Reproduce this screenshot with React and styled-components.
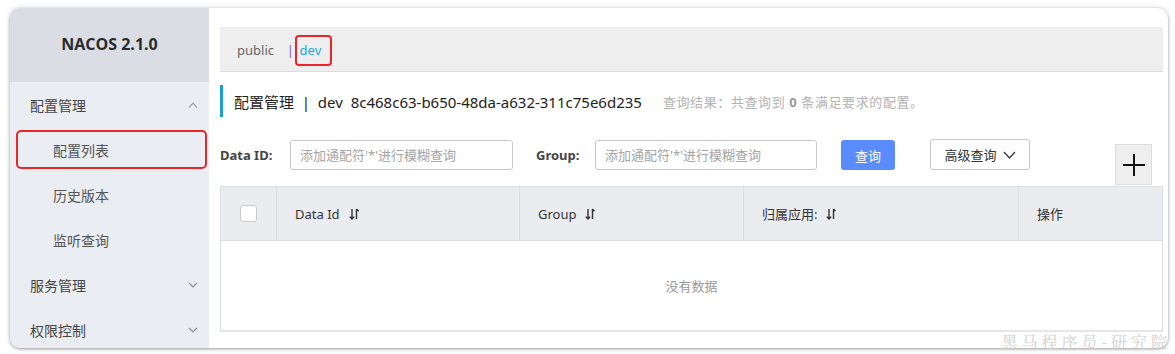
import React from 'react'
import styled, { createGlobalStyle } from 'styled-components'

const Global = createGlobalStyle`
  html, body { margin: 0; padding: 0; background: #fff; }
  body { font-family: "Noto Sans", "Noto Sans CJK SC", sans-serif; }
`

const SortIcon = () => (
  <svg width="10" height="12" viewBox="0 0 10 12" fill="none" stroke="#333" strokeWidth="1.4">
    <path d="M3 1v10M0.8 8.6L3 11l2.2-2.4" />
    <path d="M7.5 11V1M7.5 1l2 2.2" />
  </svg>
)

const Chevron = ({ up }) => (
  <svg width="10" height="6" viewBox="0 0 10 6" fill="none" stroke="#888" strokeWidth="1.1">
    {up ? <path d="M1 5.5L5 1.2l4 4.3" /> : <path d="M1 0.8L5 5l4-4.2" />}
  </svg>
)

const menu = [
  { label: '配置管理', top: true, chevron: 'up' },
  { label: '配置列表', active: true },
  { label: '历史版本' },
  { label: '监听查询' },
  { label: '服务管理', top: true, chevron: 'down' },
  { label: '权限控制', top: true, chevron: 'down' },
]

const columns = [
  { label: 'Data Id', width: 243, sort: true },
  { label: 'Group', width: 224, sort: true },
  { label: '归属应用:', width: 275, sort: true },
  { label: '操作', flex: true },
]

export default function App() {
  return (
    <Page>
      <Global />
      <Frame>
        <Sidebar>
          <Brand>NACOS 2.1.0</Brand>
          <Menu>
            {menu.map((m) => (
              <MenuItem key={m.label} $top={m.top}>
                {m.active ? <Highlight>{m.label}</Highlight> : <span>{m.label}</span>}
                {m.chevron && <Chevron up={m.chevron === 'up'} />}
              </MenuItem>
            ))}
          </Menu>
        </Sidebar>
        <Main>
          <NamespaceBar>
            <NsLink>public</NsLink>
            <NsSep>|</NsSep>
            <NsActive>dev</NsActive>
          </NamespaceBar>
          <TitleRow>
            <Title>配置管理&nbsp;&nbsp;|&nbsp;&nbsp;dev&nbsp;&nbsp;8c468c63-b650-48da-a632-311c75e6d235</Title>
            <Summary>查询结果：共查询到 <b>0</b> 条满足要求的配置。</Summary>
          </TitleRow>
          <SearchRow>
            <Label>Data ID:</Label>
            <Input $w={223} placeholder="添加通配符'*'进行模糊查询" />
            <Label $ml={23}>Group:</Label>
            <Input $w={222} placeholder="添加通配符'*'进行模糊查询" />
            <PrimaryButton>查询</PrimaryButton>
            <GhostButton>
              高级查询
              <svg width="13" height="8" viewBox="0 0 13 8" fill="none" stroke="#333" strokeWidth="1.2">
                <path d="M1 1l5.5 6L12 1" />
              </svg>
            </GhostButton>
            <AddButton>
              <svg width="22" height="22" viewBox="0 0 22 22" stroke="#111" strokeWidth="2">
                <path d="M11 0v22M0 11h22" />
              </svg>
            </AddButton>
          </SearchRow>
          <Table>
            <HeadRow>
              <CheckCell>
                <Checkbox />
              </CheckCell>
              {columns.map((c) => (
                <HeadCell key={c.label} $w={c.width} $flex={c.flex}>
                  {c.label}
                  {c.sort && <SortIcon />}
                </HeadCell>
              ))}
            </HeadRow>
            <Empty>没有数据</Empty>
          </Table>
        </Main>
      </Frame>
      <Watermark>黑马程序员-研究院</Watermark>
    </Page>
  )
}

const Page = styled.div`
  position: relative;
  width: 1175px;
  height: 354px;
  overflow: hidden;
  padding-top: 8px;
  box-sizing: border-box;
`

const Frame = styled.div`
  margin-left: 10px;
  width: 1158px;
  height: 340px;
  border-radius: 10px;
  overflow: hidden;
  display: flex;
  background: #fff;
  box-shadow: 0 1px 3px rgba(0, 0, 0, 0.35), 0 0 6px rgba(0, 0, 0, 0.12);
`

const Sidebar = styled.div`
  width: 199px;
  flex-shrink: 0;
  background: #eaedf1;
  display: flex;
  flex-direction: column;
`

const Brand = styled.div`
  height: 74px;
  flex-shrink: 0;
  background: #dadee4;
  display: flex;
  align-items: center;
  justify-content: center;
  font-family: "Open Sans", "Noto Sans", sans-serif;
  font-weight: 700;
  font-size: 16px;
  color: #2b2b2b;
  padding-bottom: 2px;
  box-sizing: border-box;
`

const Menu = styled.div`
  display: flex;
  flex-direction: column;
`

const MenuItem = styled.div`
  height: 45px;
  flex-shrink: 0;
  display: flex;
  align-items: center;
  justify-content: space-between;
  padding: ${(p) => (p.$top ? '0 11px 0 20px' : '0 2px 0 43px')};
  font-size: 14px;
  color: ${(p) => (p.$top ? '#444' : '#555')};
`

const Highlight = styled.span`
  flex: 1;
  margin-left: -37px;
  height: 39px;
  box-sizing: border-box;
  border: 2px solid #e8262a;
  border-radius: 5px;
  display: flex;
  align-items: center;
  padding-left: 35px;
`

const Main = styled.div`
  flex: 1;
  padding: 19px 5px 0 11px;
  display: flex;
  flex-direction: column;
  min-width: 0;
`

const NamespaceBar = styled.div`
  height: 45px;
  background: #eeeeee;
  border-bottom: 1px solid #dcdcdc;
  box-sizing: border-box;
  display: flex;
  align-items: center;
  padding: 2px 0 0 17px;
  font-size: 13px;
`

const NsLink = styled.span`
  color: #666;
`

const NsSep = styled.span`
  color: #7a5f99;
  margin-left: 13px;
  font-size: 12px;
`

const NsActive = styled.span`
  color: #22a6e6;
  margin-left: 1px;
  border: 2px solid #e8262a;
  border-radius: 4px;
  height: 31px;
  width: 37px;
  box-sizing: border-box;
  display: flex;
  align-items: center;
  padding-left: 3px;
`

const TitleRow = styled.div`
  margin-top: 13px;
  height: 32px;
  border-left: 3px solid #1c9bd6;
  display: flex;
  align-items: center;
  padding-left: 11px;
  white-space: nowrap;
`

const Title = styled.span`
  font-size: 15px;
  color: #222;
`

const Summary = styled.span`
  margin-left: 21px;
  font-size: 13px;
  letter-spacing: 0.6px;
  color: #b3b3b3;
  b { color: #999; }
`

const SearchRow = styled.div`
  margin-top: 23px;
  height: 46px;
  display: flex;
  align-items: flex-start;
`

const Label = styled.span`
  height: 30px;
  display: flex;
  align-items: center;
  font-size: 13px;
  font-weight: 700;
  color: #444;
  margin-left: ${(p) => p.$ml || 0}px;
  margin-right: 12px;
  width: ${(p) => (p.$ml ? 47 : 58)}px;
`

const Input = styled.input`
  width: ${(p) => p.$w}px;
  height: 30px;
  box-sizing: border-box;
  border: 1px solid #c8c8c8;
  border-radius: 3px;
  padding: 0 9px;
  font-family: inherit;
  font-size: 13px;
  outline: none;
  &::placeholder { color: #a5a5a5; }
`

const PrimaryButton = styled.button`
  margin-left: 24px;
  width: 54px;
  height: 30px;
  border: none;
  border-radius: 3px;
  background: #5a8cff;
  color: #fff;
  font-family: inherit;
  font-size: 13px;
`

const GhostButton = styled.button`
  margin-left: 35px;
  width: 100px;
  height: 31px;
  margin-top: -1px;
  box-sizing: border-box;
  border: 1px solid #c8c8c8;
  border-radius: 3px;
  background: #fff;
  color: #333;
  font-family: inherit;
  font-size: 13px;
  display: flex;
  align-items: center;
  justify-content: center;
  gap: 6px;
`

const AddButton = styled.button`
  margin-left: auto;
  margin-right: 11px;
  margin-top: 4px;
  width: 37px;
  height: 41px;
  box-sizing: border-box;
  border: 1px solid #dedede;
  background: #eeeeee;
  display: flex;
  align-items: center;
  justify-content: center;
  padding: 0;
`

const Table = styled.div`
  border: 1px solid #dcdde3;
  border-bottom-width: 2px;
  border-bottom-color: #e5e6ec;
  display: flex;
  flex-direction: column;
`

const HeadRow = styled.div`
  height: 53px;
  background: #ebecf0;
  border-bottom: 1px solid #dcdde3;
  display: flex;
`

const CheckCell = styled.div`
  width: 56px;
  flex-shrink: 0;
  box-sizing: border-box;
  border-right: 1px solid #dcdde3;
  display: flex;
  align-items: center;
  justify-content: center;
`

const Checkbox = styled.span`
  width: 15px;
  height: 15px;
  background: #fff;
  border: 1px solid #c9c9c9;
  border-radius: 3px;
  margin-top: -1px;
`

const HeadCell = styled.div`
  ${(p) => (p.$flex ? 'flex: 1;' : `width: ${p.$w}px; flex-shrink: 0;`)}
  box-sizing: border-box;
  border-right: ${(p) => (p.$flex ? 'none' : '1px solid #dcdde3')};
  display: flex;
  align-items: center;
  gap: 9px;
  padding-left: 18px;
  font-size: 13px;
  color: #333;
`

const Empty = styled.div`
  height: 89px;
  display: flex;
  align-items: center;
  justify-content: center;
  font-size: 13px;
  color: #999;
`

const Watermark = styled.div`
  position: absolute;
  right: 4px;
  bottom: 2px;
  font-family: "Noto Serif CJK SC", "Liberation Serif", serif;
  font-size: 16px;
  line-height: 20px;
  letter-spacing: 4px;
  color: #d0d0d0;
`
